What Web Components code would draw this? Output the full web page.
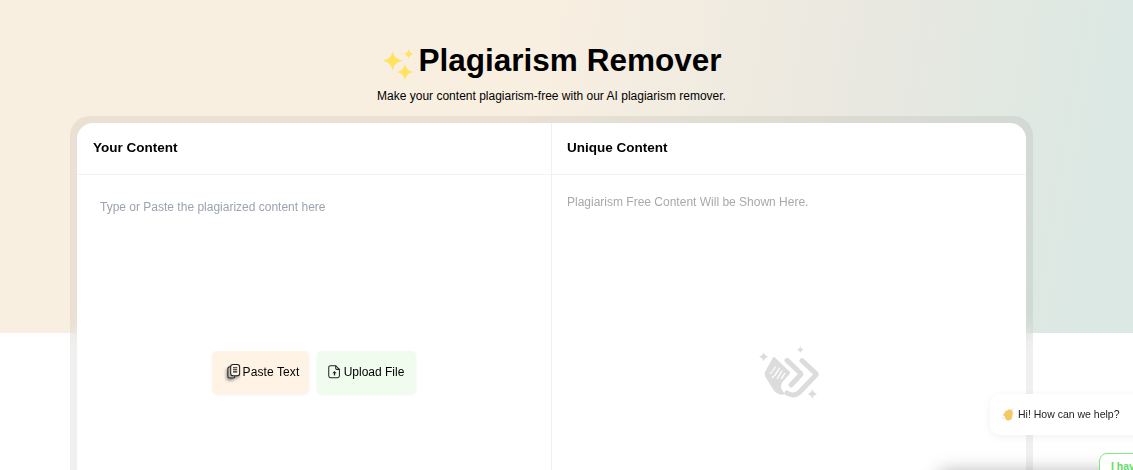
<!DOCTYPE html>
<html lang="en">
<head>
<meta charset="utf-8">
<title>Plagiarism Remover</title>
<style>
  html, body { margin: 0; height: 470px; overflow: hidden; background: #fff; }
  body { font-family: "Liberation Sans", Arial, sans-serif; color: #000; }
</style>
</head>
<body>
<pr-page>
  <pr-hero heading="Plagiarism Remover" tagline="Make your content plagiarism-free with our AI plagiarism remover."></pr-hero>
  <pr-workspace>
    <pr-panel slot="left" heading="Your Content">
      <pr-source></pr-source>
    </pr-panel>
    <pr-panel slot="right" heading="Unique Content">
      <pr-result></pr-result>
    </pr-panel>
  </pr-workspace>
</pr-page>
<pr-chat></pr-chat>

<script>
// -Page shell: gradient band behind the top of the page
class PrPage extends HTMLElement {
  constructor() {
    super();
    this.attachShadow({ mode: 'open' });
    this.shadowRoot.innerHTML = `
      <style>
        :host {
          display: block;
          height: 470px;
          padding: 0 100px 0 70px;
          box-sizing: border-box;
          background: linear-gradient(100deg, #f9efe1 0%, #f9efe1 45%, #e9e8e0 74%, #dbe8e4 96%) top / 100% 333px no-repeat;
        }
      </style>
      <slot></slot>`;
  }
}

class PrHero extends HTMLElement {
  constructor() {
    super();
    this.attachShadow({ mode: 'open' });
    this.shadowRoot.innerHTML = `
      <style>
        :host { display: block; padding-top: 41px; height: 75px; text-align: center; }
        h1 {
          margin: 0;
          height: 38px;
          display: flex;
          justify-content: center;
          align-items: flex-start;
          font-size: 31.500px;
          line-height: 38px;
          font-weight: 700;
        }
        svg { width: 37px; height: 38px; flex: none; margin-top: 3px; }
        p { margin: 8px 0 0; font-size: 12px; line-height: 18px; }
      </style>
      <h1>
        <svg viewBox="0 0 37 38" aria-hidden="true" fill="#ffe25e">
          <path d="M10.700 6.500c1 6 3.500 8.700 10 10.200c-6.500 1.500-9 4.200-10 10.200c-1-6-3.500-8.700-10-10.200c6.500-1.500 9-4.200 10-10.200z"/>
          <path d="M23 19.500c.9 5 3 7.400 8.500 8.500c-5.500 1.100-7.600 3.500-8.500 8.500c-.9-5-3-7.400-8.500-8.500c5.500-1.100 7.600-3.500 8.500-8.500z"/>
          <path d="M26.700 4.500c.5 3.300 1.700 4.700 5 5.500c-3.300.8-4.500 2.200-5 5.500c-.5-3.300-1.700-4.700-5-5.500c3.300-.8 4.500-2.200 5-5.500z"/>
          <circle cx="20" cy="10" r=".6"/><circle cx="33" cy="19" r=".6"/><circle cx="14" cy="33" r=".6"/>
        </svg>
        <span></span>
      </h1>
      <p></p>`;
  }
  connectedCallback() {
    this.shadowRoot.querySelector('span').textContent = this.getAttribute('heading');
    this.shadowRoot.querySelector('p').textContent = this.getAttribute('tagline');
  }
}

class PrWorkspace extends HTMLElement {
  constructor() {
    super();
    this.attachShadow({ mode: 'open' });
    this.shadowRoot.innerHTML = `
      <style>
        :host {
          display: block;
          border-radius: 20px;
          padding: 7px;
          background: rgba(0, 0, 0, 0.06);
          -webkit-backdrop-filter: blur(10px);
          backdrop-filter: blur(10px);
        }
        .card {
          display: grid;
          grid-template-columns: 475px 474px;
          height: 560px;
          background: #fff;
          border-radius: 16px;
          overflow: hidden;
        }
      </style>
      <div class="card">
        <slot name="left"></slot>
        <slot name="right"></slot>
      </div>`;
  }
}

class PrPanel extends HTMLElement {
  constructor() {
    super();
    this.attachShadow({ mode: 'open' });
    this.shadowRoot.innerHTML = `
      <style>
        :host { display: flex; flex-direction: column; min-width: 0; }
        :host([slot=left]) { border-right: 1px solid #f0f0f0; }
        h2 {
          margin: 0;
          font-size: 13.500px;
          line-height: 16px;
          font-weight: 700;
          height: 52px;
          box-sizing: border-box;
          padding: 17px 15px 0;
          border-bottom: 1px solid #f3f3f3;
        }
        :host([slot=left]) h2 { padding-left: 16px; }
      </style>
      <h2></h2>
      <slot></slot>`;
  }
  connectedCallback() {
    this.shadowRoot.querySelector('h2').textContent = this.getAttribute('heading');
  }
}

class PrSource extends HTMLElement {
  constructor() {
    super();
    this.attachShadow({ mode: 'open' });
    this.shadowRoot.innerHTML = `
      <style>
        :host { display: block; padding: 25px 23px 0; font-size: 12px; }
        .hint { color: #9ca3af; line-height: 14px; height: 151px; }
        .actions { display: flex; justify-content: center; gap: 8px; }
      </style>
      <div class="hint">Type or Paste the plagiarized content here</div>
      <div class="actions">
        <pr-action tone="paste">
          <svg slot="icon" width="15" height="17" viewBox="0 0 16 17" fill="none" stroke="#222" stroke-width="1.100" style="filter: drop-shadow(-1px 2px 1.500px rgba(0,0,0,.4))">
            <path d="M2 5.500a2 2 0 0 1 2-2h3.500a2 2 0 0 1 2 2v8a2 2 0 0 1-2 2H4a2 2 0 0 1-2-2z" fill="#bbb"/>
            <rect x="5" y="1" width="9.500" height="12" rx="2.500" fill="#fff3e6"/>
            <path d="M7.500 4.500h4.500M7.500 6.700h4.500M7.500 8.900h4.500"/>
          </svg>
          Paste Text
        </pr-action>
        <pr-action tone="upload">
          <svg slot="icon" width="13" height="15" viewBox="0 0 14 16" fill="none" stroke="#222" stroke-width="1.100">
            <path d="M3.300 1.700h5l4 4v7a2 2 0 0 1-2 2h-7.500a2 2 0 0 1-2-2v-9a2 2 0 0 1 2-2z"/>
            <path d="M8.300 1.800V4.500a1.200 1.200 0 0 0 1.200 1.200h3"/>
            <path d="M7 12.200V9" stroke-width="1.400"/>
            <path d="M4.800 9.800L7 7.500l2.200 2.300z" fill="#222" stroke="none"/>
          </svg>
          Upload File
        </pr-action>
      </div>`;
  }
}

class PrAction extends HTMLElement {
  constructor() {
    super();
    this.attachShadow({ mode: 'open' });
    this.shadowRoot.innerHTML = `
      <style>
        :host {
          display: flex;
          align-items: center;
          justify-content: center;
          gap: 2px;
          height: 43px;
          padding-bottom: 2px;
          box-sizing: border-box;
          border-radius: 5px;
          font-size: 12px;
          color: #000;
          box-shadow: 0 1px 3px rgba(0, 0, 0, 0.05);
        }
        :host([tone=paste]) { width: 97px; background: #fff3e6; padding-left: 4px; letter-spacing: 0.1px; }
        :host([tone=upload]) { width: 99px; background: #f0fcee; gap: 3px; padding-right: 1px; }
        slot[name=icon] { display: flex; }
      </style>
      <slot name="icon"></slot>
      <slot></slot>`;
  }
}

class PrResult extends HTMLElement {
  constructor() {
    super();
    this.attachShadow({ mode: 'open' });
    this.shadowRoot.innerHTML = `
      <style>
        :host { display: block; padding: 20px 15px 0; font-size: 12px; color: #a9a9a9; }
        .hint { line-height: 14px; height: 150px; }
        .empty { display: flex; justify-content: center; }
      </style>
      <div class="hint">Plagiarism Free Content Will be Shown Here.</div>
      <div class="empty">
        <svg width="64" height="54" viewBox="51 30 192 162" fill="#dcdcdc">
          <path d="M71 51c2 8 5 11 14 14c-9 3-12 6-14 14c-2-8-5-11-14-14c9-3 12-6 14-14z"/>
          <path d="M181 34c1.500 5 3 7 9 10c-6 3-7.500 5-9 10c-1.500-5-3-7-9-10c6-3 7.500-5 9-10z"/>
          <path d="M217 162c2 8 5 11 14 15c-9 4-12 7-14 15c-2-8-5-11-14-15c9-4 12-7 14-15z"/>
          <path d="M104 67l44 42c3 3 3 6 0 9l-18 20c-9 9-9 22-1 31l6 8c-15 6-28-2-36-14l-22-36c-4-7-4-13 0-20l21-38c2-3 4-4 6-2z"/>
          <g fill="none" stroke="#dcdcdc" stroke-width="15" stroke-linejoin="round" stroke-linecap="round">
            <path d="M141 76l40 38c2 2 2 4 0 6l-28 30"/>
            <path d="M186 77l41 38c2 2 2 4 0 6l-50 52c-10 9-24 9-36 1"/>
          </g>
          <g stroke="#fff" stroke-width="4" stroke-linecap="round" fill="none">
            <path d="M106 96l-8 12M118 100l-14 22M126 108l-14 22M94 112l-2 3M100 124l-3 4M134 116l-10 15"/>
          </g>
        </svg>
      </div>`;
  }
}

// -Floating help widget, pinned over the page bottom-right
class PrChat extends HTMLElement {
  constructor() {
    super();
    this.attachShadow({ mode: 'open' });
    this.shadowRoot.innerHTML = `
      <style>
        :host { position: fixed; inset: 0; display: block; overflow: hidden; pointer-events: none; }
        .bubble {
          position: absolute;
          left: 990px;
          top: 394px;
          width: 180px;
          height: 41px;
          display: flex;
          align-items: center;
          gap: 4px;
          padding: 0 0 1px 12px;
          box-sizing: border-box;
          background: #fff;
          border-radius: 10px;
          box-shadow: 0 2px 8px rgba(0, 0, 0, 0.06);
          font-size: 10.500px;
          color: #222;
          white-space: nowrap;
        }
        .tray {
          position: absolute;
          left: 940px;
          top: 474px;
          width: 300px;
          height: 60px;
          background: #fff;
          box-shadow: 0 0 20px rgba(0, 0, 0, 0.4);
        }
        .quick {
          position: absolute;
          left: 1099px;
          top: 453px;
          padding: 6px 10px 6px 11px;
          height: 40px;
          box-sizing: border-box;
          background: #fff;
          border: 1px solid #80e880;
          border-radius: 8px;
          color: #5fdc6a;
          font-size: 10.500px;
          font-weight: 700;
          white-space: nowrap;
        }
      </style>
      <div class="tray"></div>
      <div class="bubble">
        <svg width="12" height="13" viewBox="0 0 12 13">
          <g fill="none" stroke="#f6c863" stroke-width="2.400" stroke-linecap="round">
            <path d="M2.500 7L5 3.500M4.500 7.500L7 2.500M7 8L9 2.800M9 8l.7-3.500"/>
          </g>
          <path fill="#f6c863" d="M2.500 7.500L9.800 5.500l.5 3c0 2.500-2 4-4.300 4c-2 0-3-1.500-3.500-5z"/>
          <path stroke="#a5d8f0" stroke-width="1" fill="none" d="M.5 9.500l1 1.500M10 .5l1.200 1.200"/>
        </svg>
        <span>Hi! How can we help?</span>
      </div>
      <div class="quick">I have a question</div>`;
  }
}

customElements.define('pr-page', PrPage);
customElements.define('pr-hero', PrHero);
customElements.define('pr-workspace', PrWorkspace);
customElements.define('pr-panel', PrPanel);
customElements.define('pr-source', PrSource);
customElements.define('pr-action', PrAction);
customElements.define('pr-result', PrResult);
customElements.define('pr-chat', PrChat);
</script>
</body>
</html>
